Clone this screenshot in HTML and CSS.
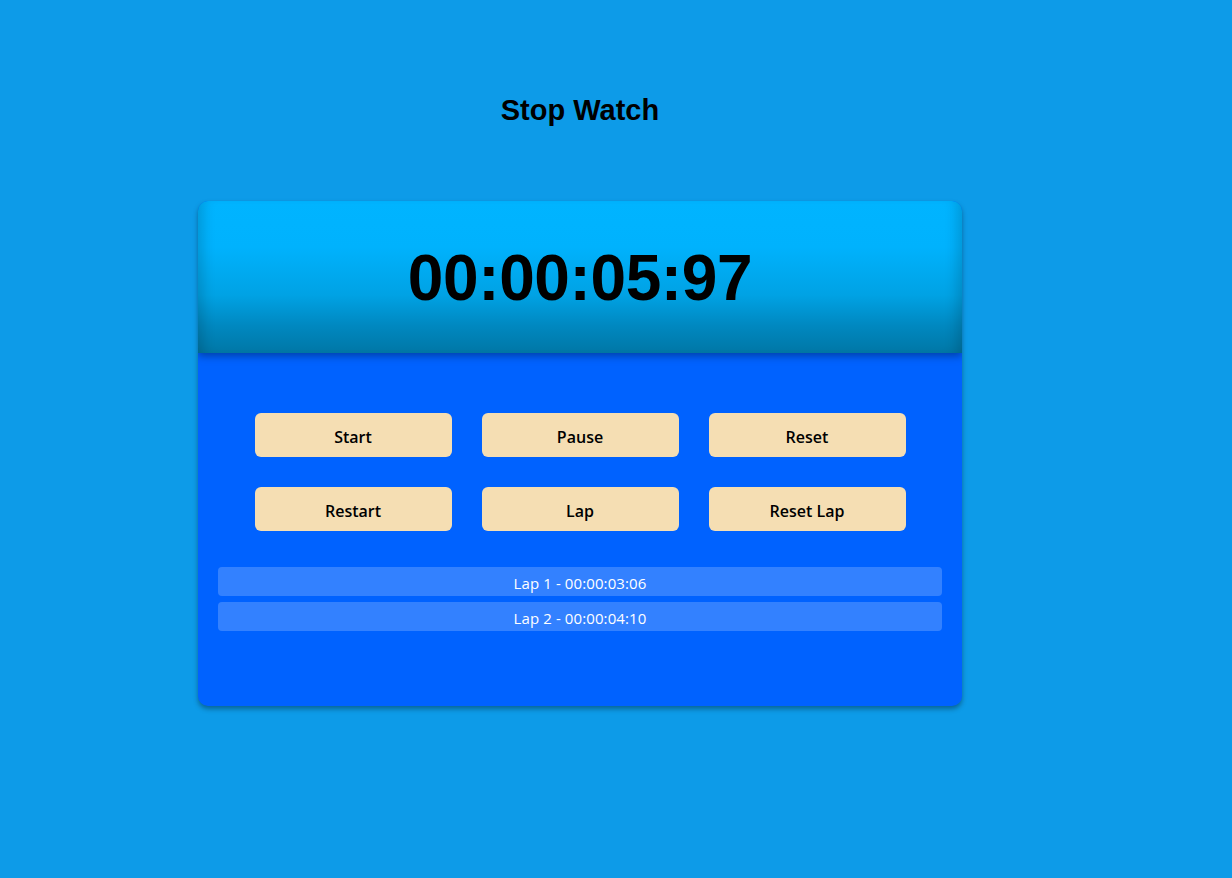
FILE: index.html
```html
<!DOCTYPE html>
<html lang="en">
<head>
<meta charset="utf-8">
<title>Stop Watch</title>
<link rel="stylesheet" href="styles.css">
</head>
<body>
<main class="page">
  <h1 class="title">Stop Watch</h1>
  <section class="watch">
    <header class="display">
      <div class="time">00:00:05:97</div>
    </header>
    <div class="controls">
      <div class="buttons">
        <button class="btn">Start</button>
        <button class="btn">Pause</button>
        <button class="btn">Reset</button>
        <button class="btn">Restart</button>
        <button class="btn">Lap</button>
        <button class="btn">Reset Lap</button>
      </div>
      <ul class="laps">
        <li class="lap">Lap 1 - 00:00:03:06</li>
        <li class="lap">Lap 2 - 00:00:04:10</li>
      </ul>
    </div>
  </section>
</main>
</body>
</html>
```

FILE: styles.css
```css
* { box-sizing: border-box; }

html, body {
  margin: 0;
  padding: 0;
  height: 100%;
}

body {
  background: #0d9be8;
  font-family: "Liberation Sans", Arial, sans-serif;
}

.page {
  width: 764px;
  margin-left: 198px;
  padding-top: 93px;
}

.title {
  margin: 0;
  text-align: center;
  font-family: "Liberation Sans", Arial, sans-serif;
  font-weight: 700;
  font-size: 29px;
  line-height: 34px;
  color: #000;
}

.watch {
  margin-top: 74px;
  height: 505px;
  background: #0062ff;
  border-radius: 10px;
  overflow: hidden;
  box-shadow: 0 3px 5px rgba(0, 0, 0, 0.35);
}

.display {
  position: relative;
  z-index: 1;
  height: 152px;
  display: flex;
  align-items: center;
  justify-content: center;
  background: linear-gradient(to bottom, #00b4ff 0%, #00b2fd 30%, #00a2e4 62%, #0088c0 82%, #0077a6 100%);
  box-shadow: inset 14px 0 14px -10px rgba(0, 0, 0, 0.18), inset -14px 0 14px -10px rgba(0, 0, 0, 0.18), 0 3px 8px rgba(0, 0, 0, 0.35);
}

.time {
  font-family: "Liberation Sans", Arial, sans-serif;
  font-weight: 700;
  font-size: 64px;
  line-height: 1;
  color: #000;
  letter-spacing: -0.4px;
  margin-top: 1px;
}

.controls {
  padding: 60px 20px 0;
}

.buttons {
  display: grid;
  grid-template-columns: repeat(3, 197px);
  column-gap: 30px;
  row-gap: 30px;
  justify-content: center;
}

.btn {
  height: 44px;
  border: none;
  border-radius: 6px;
  background: #f5deb3;
  color: #000;
  font-family: "Open Sans", "Noto Sans", sans-serif;
  font-weight: 600;
  font-size: 16px;
  padding: 3px 0 0;
  cursor: pointer;
}

.laps {
  list-style: none;
  margin: 36px 0 0;
  padding: 0;
  display: flex;
  flex-direction: column;
  gap: 6px;
}

.lap {
  height: 29px;
  padding-top: 2px;
  display: flex;
  align-items: center;
  justify-content: center;
  background: rgba(255, 255, 255, 0.2);
  border-radius: 4px;
  color: #fff;
  font-family: "Open Sans", "Noto Sans", sans-serif;
  font-size: 15px;
  letter-spacing: 0.1px;
}
```
